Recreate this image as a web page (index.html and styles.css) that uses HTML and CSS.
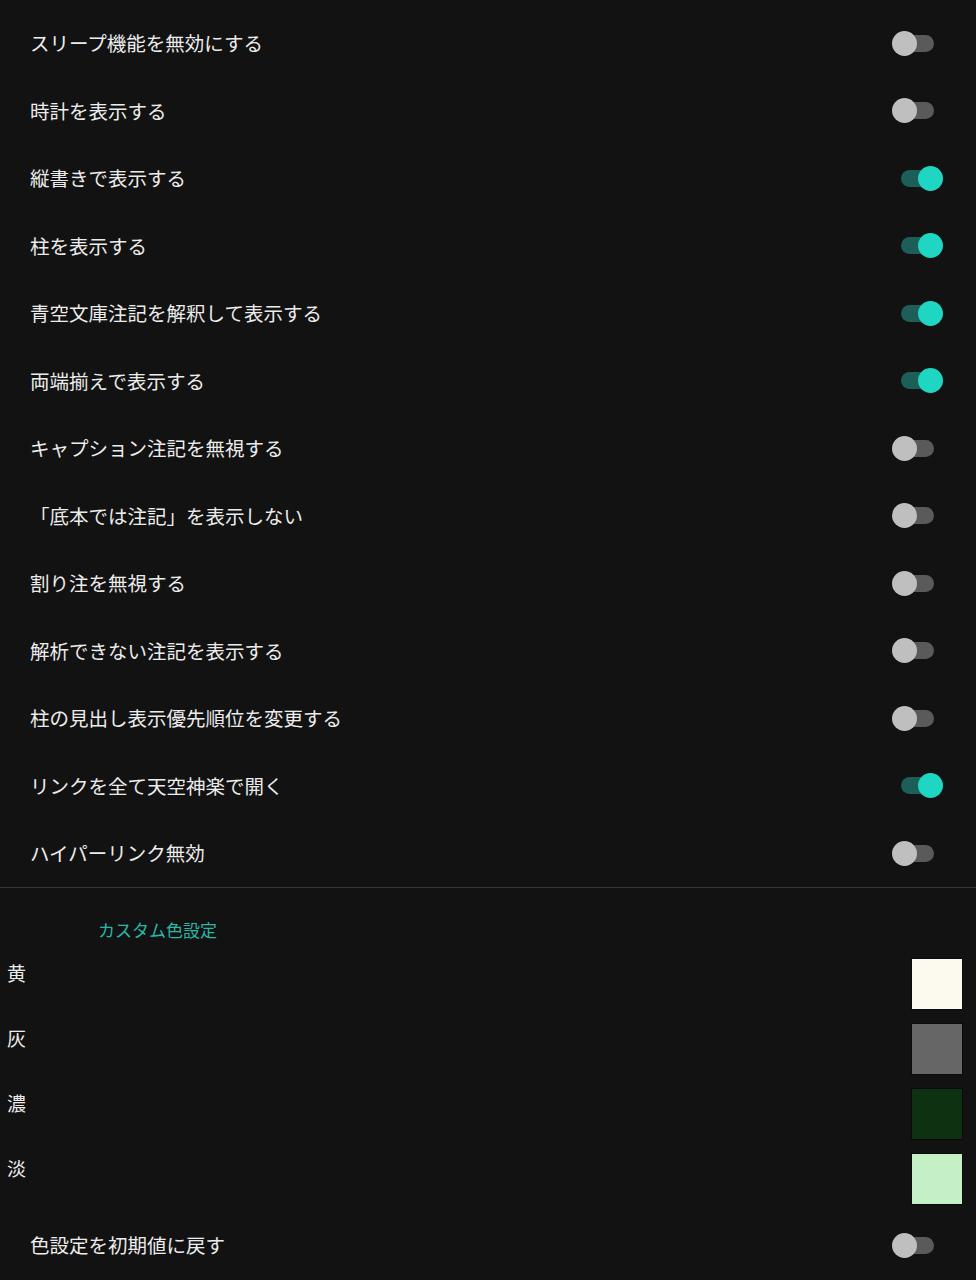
FILE: index.html
```html
<!DOCTYPE html>
<html lang="ja">
<head>
    <meta charset="UTF-8">
    <meta name="viewport" content="width=device-width, initial-scale=1.0">
    <title>表示設定</title>
    <link rel="stylesheet" href="styles.css">
</head>
<body>
    <div class="settings">
        <div class="row"><span class="label">スリープ機能を無効にする</span><span class="switch"><span class="track"></span><span class="thumb"></span></span></div>
        <div class="row"><span class="label">時計を表示する</span><span class="switch"><span class="track"></span><span class="thumb"></span></span></div>
        <div class="row"><span class="label">縦書きで表示する</span><span class="switch on"><span class="track"></span><span class="thumb"></span></span></div>
        <div class="row"><span class="label">柱を表示する</span><span class="switch on"><span class="track"></span><span class="thumb"></span></span></div>
        <div class="row"><span class="label">青空文庫注記を解釈して表示する</span><span class="switch on"><span class="track"></span><span class="thumb"></span></span></div>
        <div class="row"><span class="label">両端揃えで表示する</span><span class="switch on"><span class="track"></span><span class="thumb"></span></span></div>
        <div class="row"><span class="label">キャプション注記を無視する</span><span class="switch"><span class="track"></span><span class="thumb"></span></span></div>
        <div class="row"><span class="label">「底本では注記」を表示しない</span><span class="switch"><span class="track"></span><span class="thumb"></span></span></div>
        <div class="row"><span class="label">割り注を無視する</span><span class="switch"><span class="track"></span><span class="thumb"></span></span></div>
        <div class="row"><span class="label">解析できない注記を表示する</span><span class="switch"><span class="track"></span><span class="thumb"></span></span></div>
        <div class="row"><span class="label">柱の見出し表示優先順位を変更する</span><span class="switch"><span class="track"></span><span class="thumb"></span></span></div>
        <div class="row"><span class="label">リンクを全て天空神楽で開く</span><span class="switch on"><span class="track"></span><span class="thumb"></span></span></div>
        <div class="row"><span class="label">ハイパーリンク無効</span><span class="switch"><span class="track"></span><span class="thumb"></span></span></div>
    </div>

    <div class="divider"></div>

    <h2 class="section-title">カスタム色設定</h2>

    <div class="colors">
        <div class="color-row"><span class="color-label">黄</span><span class="swatch swatch-yellow"></span></div>
        <div class="color-row"><span class="color-label">灰</span><span class="swatch swatch-gray"></span></div>
        <div class="color-row"><span class="color-label">濃</span><span class="swatch swatch-dark"></span></div>
        <div class="color-row"><span class="color-label">淡</span><span class="swatch swatch-light"></span></div>
    </div>

    <div class="row"><span class="label">色設定を初期値に戻す</span><span class="switch"><span class="track"></span><span class="thumb"></span></span></div>
</body>
</html>
```

FILE: styles.css
```css
*{
    padding: 0;margin: 0;
    box-sizing: border-box;
}
body{
    font-family: "Noto Sans CJK JP", "Noto Sans", sans-serif;
    background-color: #121212;
    color: #ececec;
    padding-top: 9.25px;
}
.row{
    display: flex;
    align-items: center;
    justify-content: space-between;
    height: 67.5px;
    padding-left: 30px;
    padding-right: 32px;
}
.label{
    font-size: 19.5px;
    line-height: 28px;
}

/* switch */
.switch{
    position: relative;
    width: 52px;
    height: 25px;
}
.track{
    position: absolute;
    left: 1px;
    top: 4px;
    width: 41px;
    height: 17px;
    border-radius: 9px;
    background-color: #5a5a5a;
}
.thumb{
    position: absolute;
    left: 0;
    top: 0;
    width: 25px;
    height: 25px;
    border-radius: 50%;
    background-color: #bfbfbf;
}
.switch.on .track{
    left: 9px;
    background-color: #1c5f58;
}
.switch.on .thumb{
    left: 26px;
    background-color: #1fd6c2;
}

.divider{
    height: 1px;
    background-color: #353535;
}
.section-title{
    font-size: 17px;
    font-weight: normal;
    line-height: 20px;
    color: #27b9a6;
    padding: 32px 0 11.5px 98px;
}

/* custom colors */
.color-row{
    display: flex;
    align-items: flex-start;
    justify-content: space-between;
    height: 65px;
    padding-left: 7px;
    padding-right: 13px;
}
.color-label{
    font-size: 19px;
    line-height: 28px;
    padding-top: 7.5px;
}
.swatch{
    width: 52px;
    height: 52px;
    margin-top: 6.5px;
    border: 1px solid #0a0a0a;
}
.swatch-yellow{ background-color: #fcfaee; }
.swatch-gray{ background-color: #666666; }
.swatch-dark{ background-color: #0e3112; }
.swatch-light{ background-color: #c5f0c6; }
```
